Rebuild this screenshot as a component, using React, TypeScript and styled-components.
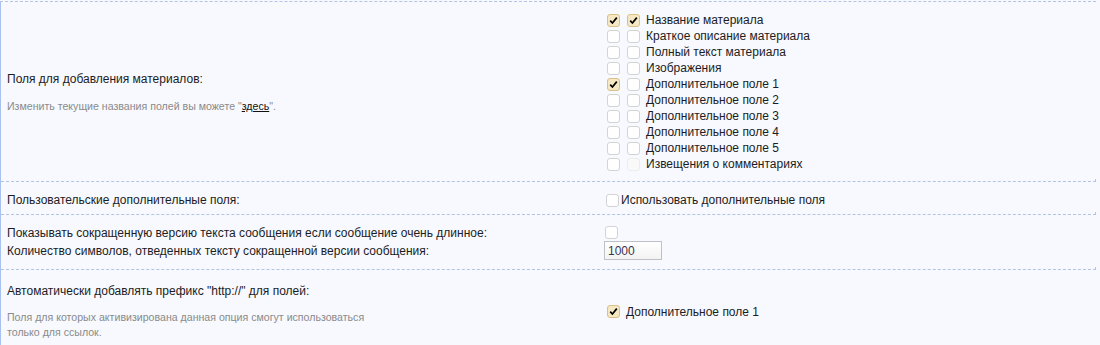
import React from "react";
import styled, { createGlobalStyle } from "styled-components";

const Global = createGlobalStyle`
  html, body { margin: 0; padding: 0; background: #f7f9fe; }
  body { font-family: "Liberation Sans", Arial, sans-serif; font-size: 12px; color: #1c1c24; }
`;

const Page = styled.div`
  width: 1095px;
  border-left: 1px solid #a9c1ee;
  margin-top: 1px;
  border-top: 1px dashed #b3c3e6;
`;

const Row = styled.div<{ $pt?: number; $pb?: number }>`
  display: grid;
  grid-template-columns: 597px 1fr;
  align-items: center;
  padding: ${(p) => p.$pt ?? 9}px 0 ${(p) => p.$pb ?? 9}px 6px;
  border-bottom: 1px dashed #b3c3e6;
  position: relative;
  &::after {
    content: "";
    position: absolute;
    right: 0;
    bottom: -1px;
    width: 1px;
    height: 3px;
    background: #b3c3e6;
  }
`;

const LastRow = styled(Row)`
  border-bottom: none;
  &::after { display: none; }
`;

const LeftCell = styled.div`
  display: flex;
  flex-direction: column;
`;

const Label = styled.div`
  font-size: 12px;
  line-height: 16px;
  color: #1c1c24;
`;

const Hint = styled.div<{ $mt?: number }>`
  font-size: 10.6px;
  line-height: 15px;
  color: #8a8a8a;
  margin-top: ${(p) => p.$mt ?? 12}px;
`;

const HintLink = styled.a`
  color: #111;
  text-decoration: underline;
`;

const RightCell = styled.div`
  display: flex;
  flex-direction: column;
`;

const CheckLine = styled.div<{ $gap?: number; $ml?: number }>`
  display: flex;
  align-items: center;
  height: 16px;
  gap: ${(p) => p.$gap ?? 6}px;
  margin-left: ${(p) => p.$ml ?? 3}px;
  font-size: 12px;
  color: #1c1c24;
`;

const BoxPair = styled.div`
  display: flex;
  gap: 7px;
`;

const Box = styled.span<{ $checked?: boolean; $disabled?: boolean }>`
  box-sizing: border-box;
  width: 13px;
  height: 13px;
  border-radius: 3px;
  border: 1px solid ${(p) => (p.$checked ? "#d9c288" : p.$disabled ? "#ececec" : "#d3d3d3")};
  background: ${(p) => (p.$checked ? "#f6e8c3" : p.$disabled ? "#f9f9f9" : "#ffffff")};
  display: inline-flex;
  align-items: center;
  justify-content: center;
  flex: none;
`;

const Check = ({ checked, disabled }: { checked?: boolean; disabled?: boolean }) => (
  <Box $checked={checked} $disabled={disabled}>
    {checked && (
      <svg width="9" height="9" viewBox="0 0 9 9">
        <path d="M1.2 4.6 L3.4 7 L7.8 1.6" fill="none" stroke="#000" strokeWidth="1.7" />
      </svg>
    )}
  </Box>
);

const Grid2 = styled.div`
  display: grid;
  grid-template-columns: 597px 1fr;
  grid-template-rows: 17px 19px;
  align-items: center;
`;

const NumInput = styled.input`
  box-sizing: border-box;
  width: 58px;
  height: 19px;
  border: 1px solid #bfc1c9;
  background: linear-gradient(#ffffff, #f3f3f3);
  font-family: "Liberation Sans", Arial, sans-serif;
  font-size: 12px;
  color: #3a3550;
  padding: 0 0 0 3px;
  margin: 0;
  outline: none;
`;

const SmallBox = styled.div`
  margin-left: 1px;
  display: flex;
  align-items: center;
`;

const fields: [boolean, boolean, string, boolean?][] = [
  [true, true, "Название материала"],
  [false, false, "Краткое описание материала"],
  [false, false, "Полный текст материала"],
  [false, false, "Изображения"],
  [true, false, "Дополнительное поле 1"],
  [false, false, "Дополнительное поле 2"],
  [false, false, "Дополнительное поле 3"],
  [false, false, "Дополнительное поле 4"],
  [false, false, "Дополнительное поле 5"],
  [false, false, "Извещения о комментариях", true],
];

export default function App() {
  return (
    <>
      <Global />
      <Page>
        <Row $pt={10} $pb={9}>
          <LeftCell>
            <Label>Поля для добавления материалов:</Label>
            <Hint>
              Изменить текущие названия полей вы можете "<HintLink href="#">здесь</HintLink>".
            </Hint>
          </LeftCell>
          <RightCell>
            {fields.map(([a, b, text, dis]) => (
              <CheckLine key={text}>
                <BoxPair>
                  <Check checked={a} />
                  <Check checked={b} disabled={dis} />
                </BoxPair>
                {text}
              </CheckLine>
            ))}
          </RightCell>
        </Row>
        <Row $pt={10} $pb={6}>
          <Label>Пользовательские дополнительные поля:</Label>
          <CheckLine $gap={2} $ml={2}>
            <Check />
            Использовать дополнительные поля
          </CheckLine>
        </Row>
        <Row $pt={9} $pb={9}>
          <Grid2>
            <Label>Показывать сокращенную версию текста сообщения если сообщение очень длинное:</Label>
            <SmallBox>
              <Check />
            </SmallBox>
            <Label>Количество символов, отведенных тексту сокращенной версии сообщения:</Label>
            <div>
              <NumInput defaultValue="1000" />
            </div>
          </Grid2>
        </Row>
        <LastRow $pt={13} $pb={8}>
          <LeftCell>
            <Label>Автоматически добавлять префикс "http://" для полей:</Label>
            <Hint $mt={11}>
              Поля для которых активизирована данная опция смогут использоваться
              <br />
              только для ссылок.
            </Hint>
          </LeftCell>
          <CheckLine $gap={6} $ml={3}>
            <Check checked />
            Дополнительное поле 1
          </CheckLine>
        </LastRow>
      </Page>
    </>
  );
}
